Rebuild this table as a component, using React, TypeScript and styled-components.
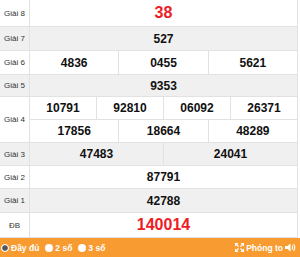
import React from "react";
import styled, { createGlobalStyle } from "styled-components";

const GlobalStyle = createGlobalStyle`
  html, body {
    margin: 0;
    padding: 0;
    background: #ffffff;
    font-family: "Liberation Sans", Arial, sans-serif;
  }
`;

type Prize = {
  label: string;
  lines: string[][];
  height: number[];
  special?: boolean;
};

const prizes: Prize[] = [
  { label: "Giải 8", lines: [["38"]], height: [27], special: true },
  { label: "Giải 7", lines: [["527"]], height: [24] },
  { label: "Giải 6", lines: [["4836", "0455", "5621"]], height: [24] },
  { label: "Giải 5", lines: [["9353"]], height: [22] },
  {
    label: "Giải 4",
    lines: [
      ["10791", "92810", "06092", "26371"],
      ["17856", "18664", "48289"],
    ],
    height: [23, 23],
  },
  { label: "Giải 3", lines: [["47483", "24041"]], height: [23] },
  { label: "Giải 2", lines: [["87791"]], height: [23] },
  { label: "Giải 1", lines: [["42788"]], height: [24] },
  { label: "ĐB", lines: [["140014"]], height: [25], special: true },
];

const App = () => {
  return (
    <>
      <GlobalStyle />
      <Wrapper>
        <Table>
          {prizes.map((p, i) => (
            <Row key={p.label} $shaded={i % 2 === 1}>
              <Label>{p.label}</Label>
              <Lines>
                {p.lines.map((line, j) => (
                  <Line key={j} style={{ height: p.height[j] }}>
                    {line.map((n) => (
                      <Cell key={n} $special={p.special}>
                        {n}
                      </Cell>
                    ))}
                  </Line>
                ))}
              </Lines>
            </Row>
          ))}
        </Table>
        <Footer>
          <Options>
            <Option>
              <Radio $checked />
              Đầy đủ
            </Option>
            <Option>
              <Radio />2 số
            </Option>
            <Option>
              <Radio />3 số
            </Option>
          </Options>
          <Zoom>
            {/* expand arrows */}
            <svg width="9" height="9" viewBox="0 0 9 9" fill="#fff" stroke="#fff">
              <path d="M1.5 1.5 L3.6 3.6 M7.5 1.5 L5.4 3.6 M1.5 7.5 L3.6 5.4 M7.5 7.5 L5.4 5.4" strokeWidth="1.3" />
              <path d="M0 0 H3.5 L0 3.5 Z M9 0 V3.5 L5.5 0 Z M0 9 V5.5 L3.5 9 Z M9 9 H5.5 L9 5.5 Z" stroke="none" />
            </svg>
            Phóng to
            <svg width="11" height="9" viewBox="0 0 11 9">
              <path d="M0 3 H2.5 L5.5 0.5 V8.5 L2.5 6 H0 Z" fill="#fff" />
              <path d="M7 2.5 Q8.4 4.5 7 6.5 M8.6 1 Q11 4.5 8.6 8" stroke="#fff" strokeWidth="1.1" fill="none" />
            </svg>
          </Zoom>
        </Footer>
      </Wrapper>
    </>
  );
};

export default App;

const Wrapper = styled.div`
  width: 300px;
  display: flex;
  flex-direction: column;
`;

const Table = styled.div`
  width: 297px;
  display: flex;
  flex-direction: column;
  border-right: 1px solid #e2e2e2;
`;

const Row = styled.div<{ $shaded?: boolean }>`
  display: flex;
  background: ${(p) => (p.$shaded ? "#f0f0f0" : "#ffffff")};
`;

const Label = styled.div`
  width: 29px;
  flex: none;
  display: flex;
  align-items: center;
  justify-content: center;
  font-size: 8px;
  color: #333333;
  border-right: 1px solid #e2e2e2;
  border-bottom: 1px solid #e2e2e2;
`;

const Lines = styled.div`
  flex: 1;
  display: flex;
  flex-direction: column;
`;

const Line = styled.div`
  display: flex;
  box-sizing: border-box;
`;

const Cell = styled.div<{ $special?: boolean }>`
  flex: 1;
  display: flex;
  align-items: center;
  justify-content: center;
  font-weight: bold;
  font-size: ${(p) => (p.$special ? "16px" : "12px")};
  color: ${(p) => (p.$special ? "#ee1c25" : "#111111")};
  border-bottom: 1px solid #e2e2e2;
  & + & {
    border-left: 1px solid #e2e2e2;
  }
`;

const Footer = styled.div`
  height: 19px;
  background: #f89c31;
  display: flex;
  align-items: center;
  justify-content: space-between;
  padding: 0 4px 0 1px;
  color: #ffffff;
  font-size: 8.5px;
  font-weight: bold;
`;

const Options = styled.div`
  display: flex;
  align-items: center;
  gap: 6px;
`;

const Option = styled.div`
  display: flex;
  align-items: center;
  gap: 2px;
`;

const Radio = styled.span<{ $checked?: boolean }>`
  width: 8px;
  height: 8px;
  border-radius: 50%;
  background: #ffffff;
  box-sizing: border-box;
  border: ${(p) => (p.$checked ? "1.5px solid #ffffff" : "none")};
  box-shadow: ${(p) => (p.$checked ? "inset 0 0 0 4px #555555" : "none")};
`;

const Zoom = styled.div`
  display: flex;
  align-items: center;
  gap: 2px;
`;
